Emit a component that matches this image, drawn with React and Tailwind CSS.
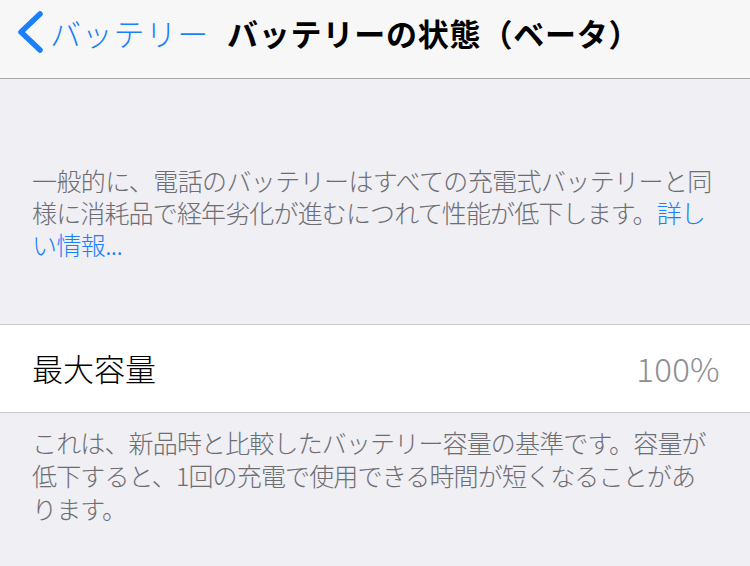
export default function App() {
  const jp = { fontFamily: '"Noto Sans CJK JP", "Noto Sans", sans-serif' };

  return (
    <div className="w-[750px] h-[566px] overflow-hidden bg-[#efeff4] flex flex-col" style={jp}>
      {/* nav bar */}
      <div className="h-[79px] shrink-0 bg-[#f7f7f8] border-b border-[#a7a7aa] flex items-center pb-[14px]">
        <div className="flex items-center pl-[16px] text-[#1a7ffb]">
          <svg width="30" height="44" viewBox="0 0 30 44" fill="none">
            <path d="M24 4 L5 22 L24 40" stroke="#1a7ffb" strokeWidth="5.5" strokeLinecap="round" strokeLinejoin="round" />
          </svg>
          <span className="ml-[4px] text-[31px] leading-none tracking-[0.8px] font-light">バッテリー</span>
        </div>
        <div className="ml-[18px] text-[31px] font-bold text-black leading-none tracking-[0.8px]">
          バッテリーの状態（ベータ）
        </div>
      </div>

      {/* description */}
      <div className="pt-[85px] pb-[64px] px-[32px] text-[25px] leading-[32px] text-[#6d6d72] whitespace-nowrap font-light">
        <div className="tracking-[-0.6px]">一般的に、電話のバッテリーはすべての充電式バッテリーと同</div>
        <div className="tracking-[-0.85px]">
          様に消耗品で経年劣化が進むにつれて性能が低下します。<span className="text-[#1a7ffb]">詳し</span>
        </div>
        <div className="text-[#1a7ffb] tracking-[-0.6px]">い情報...</div>
      </div>

      {/* row */}
      <div className="h-[89px] shrink-0 bg-white border-y border-[#c8c7cc] flex items-center justify-between pl-[32px] pr-[30px]">
        <span className="text-[31px] text-black font-light">最大容量</span>
        <span className="text-[33px] text-[#8e8e93] tracking-[0.3px] font-light">100%</span>
      </div>

      {/* footer */}
      <div className="pt-[13px] px-[32px] text-[25px] leading-[33px] text-[#6d6d72] whitespace-nowrap tracking-[-0.85px] font-light">
        <div>これは、新品時と比較したバッテリー容量の基準です。容量が</div>
        <div>低下すると、1回の充電で使用できる時間が短くなることがあ</div>
        <div>ります。</div>
      </div>
    </div>
  );
}
